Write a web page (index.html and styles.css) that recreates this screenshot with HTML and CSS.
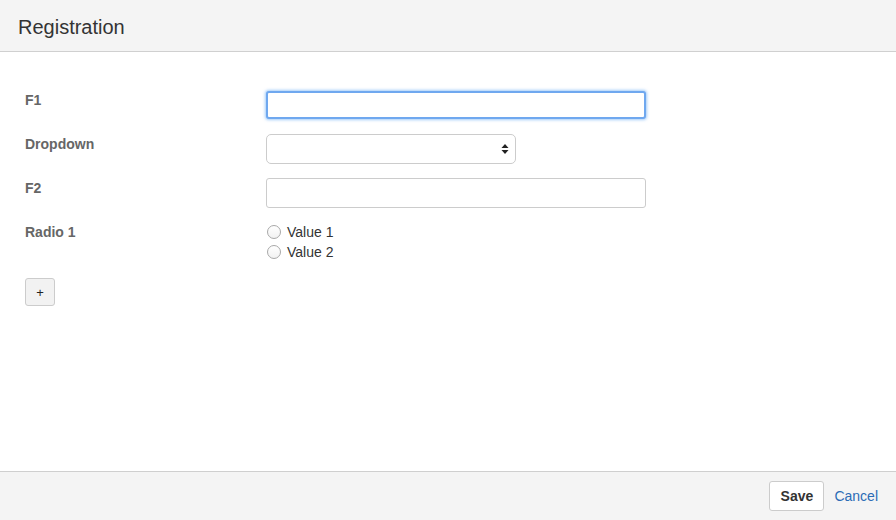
FILE: index.html
```html
<!DOCTYPE html>
<html>
<head>
<meta charset="utf-8">
<link rel="stylesheet" href="styles.css">
</head>
<body>
<div class="page">
  <header class="header"><h1 class="title">Registration</h1></header>
  <main class="content">
    <form class="form">
      <div class="row">
        <label class="label">F1</label>
        <div class="field"><div class="input input-focus"></div></div>
      </div>
      <div class="row">
        <label class="label">Dropdown</label>
        <div class="field">
          <div class="select">
            <svg class="select-arrow" width="8" height="12" viewBox="0 0 8 12"><path d="M4 1 L7.5 5 L0.5 5 Z M4 11 L7.5 7 L0.5 7 Z" fill="#222"/></svg>
          </div>
        </div>
      </div>
      <div class="row">
        <label class="label">F2</label>
        <div class="field"><div class="input"></div></div>
      </div>
      <div class="row">
        <label class="label">Radio 1</label>
        <div class="field radios">
          <label class="radio"><span class="radio-dot"></span>Value 1</label>
          <label class="radio"><span class="radio-dot"></span>Value 2</label>
        </div>
      </div>
      <div class="add-row"><button type="button" class="add-btn">+</button></div>
    </form>
  </main>
  <footer class="footer">
    <button type="button" class="save-btn">Save</button>
    <a class="cancel" href="#">Cancel</a>
  </footer>
</div>
</body>
</html>
```
FILE: styles.css
```css
html, body {
  margin: 0;
  padding: 0;
  height: 100%;
}
body {
  font-family: "Liberation Sans", Arial, Helvetica, sans-serif;
  font-size: 14px;
  color: #333;
  background: #fff;
}
.page {
  display: flex;
  flex-direction: column;
  height: 520px;
}
.header {
  height: 52px;
  box-sizing: border-box;
  background: #f4f4f4;
  border-bottom: 1px solid #d0d0d0;
  padding: 0 18px;
  display: flex;
  align-items: center;
}
.title {
  margin: 0;
  font-size: 20px;
  font-weight: normal;
  color: #333;
  line-height: 1;
  padding-top: 3px;
}
.content {
  flex: 1;
  padding: 38px 25px 0 25px;
}
.form {
  display: flex;
  flex-direction: column;
  gap: 14px;
}
.row {
  display: grid;
  grid-template-columns: 241px 380px;
  align-items: start;
}
.label {
  font-weight: bold;
  color: #666;
  line-height: 20px;
  padding-top: 0;
}
.field {
  min-height: 30px;
}
.input {
  height: 30px;
  box-sizing: border-box;
  border: 1px solid #ccc;
  border-radius: 3px;
  background: #fff;
}
.input-focus {
  border: 2px solid #6fa8ef;
  box-shadow: 0 0 3px 1px rgba(102, 170, 245, 0.6);
  border-radius: 3px;
  height: 28px;
  margin-top: 1px;
}
.select {
  width: 250px;
  height: 30px;
  box-sizing: border-box;
  border: 1px solid #ccc;
  border-radius: 5px;
  background: #fff;
  display: flex;
  align-items: center;
  justify-content: flex-end;
  padding-right: 6px;
}
.radios {
  display: flex;
  flex-direction: column;
  padding-left: 1px;
}
.radio {
  display: flex;
  align-items: center;
  gap: 6px;
  line-height: 20px;
  color: #333;
}
.radio-dot {
  width: 12px;
  height: 12px;
  border: 1px solid #a8a8a8;
  border-radius: 50%;
  background: linear-gradient(#fff, #f2f2f2);
}
.add-row {
  margin-top: 2px;
}
.add-btn {
  width: 30px;
  height: 28px;
  border: 1px solid #ccc;
  border-radius: 3px;
  background: #f2f2f2;
  font-family: "Liberation Sans", Arial, sans-serif;
  font-size: 13px;
  color: #222;
  padding: 0;
}
.footer {
  height: 49px;
  box-sizing: border-box;
  background: #f4f4f4;
  border-top: 1px solid #cfcfcf;
  display: flex;
  align-items: center;
  justify-content: flex-end;
  padding: 0 18px 1px 0;
  gap: 10px;
}
.save-btn {
  width: 55px;
  height: 30px;
  border: 1px solid #ccc;
  border-radius: 3px;
  background: #fff;
  font-family: "Liberation Sans", Arial, sans-serif;
  font-size: 14px;
  font-weight: bold;
  color: #333;
  padding: 0;
}
.cancel {
  color: #2b6cb6;
  text-decoration: none;
  font-size: 14px;
}
```
